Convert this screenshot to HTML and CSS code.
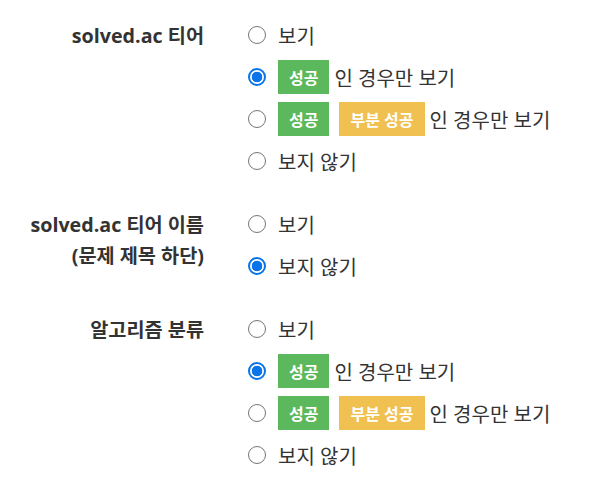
FILE: index.html
```html
<!DOCTYPE html>
<html lang="ko">
<head>
<meta charset="utf-8">
<link rel="stylesheet" href="styles.css">
</head>
<body>
<div class="settings">
  <div class="group">
    <div class="label">solved.ac 티어</div>
    <div class="options">
      <div class="opt"><span class="radio"></span><span>보기</span></div>
      <div class="opt"><span class="radio checked"></span><span class="badge ok">성공</span><span class="after">인 경우만 보기</span></div>
      <div class="opt"><span class="radio"></span><span class="badge ok">성공</span><span class="badge part">부분 성공</span><span class="after">인 경우만 보기</span></div>
      <div class="opt"><span class="radio"></span><span>보지 않기</span></div>
    </div>
  </div>
  <div class="group">
    <div class="label">solved.ac 티어 이름<br>(문제 제목 하단)</div>
    <div class="options">
      <div class="opt"><span class="radio"></span><span>보기</span></div>
      <div class="opt"><span class="radio checked"></span><span>보지 않기</span></div>
    </div>
  </div>
  <div class="group">
    <div class="label">알고리즘 분류</div>
    <div class="options">
      <div class="opt"><span class="radio"></span><span>보기</span></div>
      <div class="opt"><span class="radio checked"></span><span class="badge ok">성공</span><span class="after">인 경우만 보기</span></div>
      <div class="opt"><span class="radio"></span><span class="badge ok">성공</span><span class="badge part">부분 성공</span><span class="after">인 경우만 보기</span></div>
      <div class="opt"><span class="radio"></span><span>보지 않기</span></div>
    </div>
  </div>
</div>
</body>
</html>
```
FILE: styles.css
```css
html, body {
  margin: 0;
  padding: 0;
  background: #fff;
}
body {
  font-family: "Open Sans", "Noto Sans CJK KR", sans-serif;
  color: #333;
  font-size: 20px;
}
.settings {
  padding-top: 14px;
  display: flex;
  flex-direction: column;
  gap: 21px;
}
.group {
  display: flex;
  align-items: flex-start;
}
.label {
  width: 204px;
  text-align: right;
  font-weight: 700;
  font-size: 19.7px;
  line-height: 31px;
  padding-top: 6px;
  box-sizing: border-box;
  white-space: nowrap;
}
.options {
  margin-left: 44px;
  display: flex;
  flex-direction: column;
}
.opt {
  height: 42px;
  display: flex;
  align-items: center;
  white-space: nowrap;
}
.radio {
  width: 18px;
  height: 18px;
  box-sizing: border-box;
  border: 1.5px solid #767676;
  border-radius: 50%;
  margin-right: 12px;
  flex: none;
  background: #fff;
}
.radio.checked {
  border: 2px solid #0a74e8;
  background: radial-gradient(circle, #0a74e8 0 5px, #fff 5.6px);
}
.badge {
  display: inline-flex;
  align-items: center;
  height: 34px;
  padding: 0 11px;
  font-size: 16px;
  color: #fff;
  font-weight: 700;
  margin-right: 5px;
}
.badge.ok {
  background: #5cb85c;
}
.badge.part {
  background: #f0c050;
  margin-left: 5px;
}
```
